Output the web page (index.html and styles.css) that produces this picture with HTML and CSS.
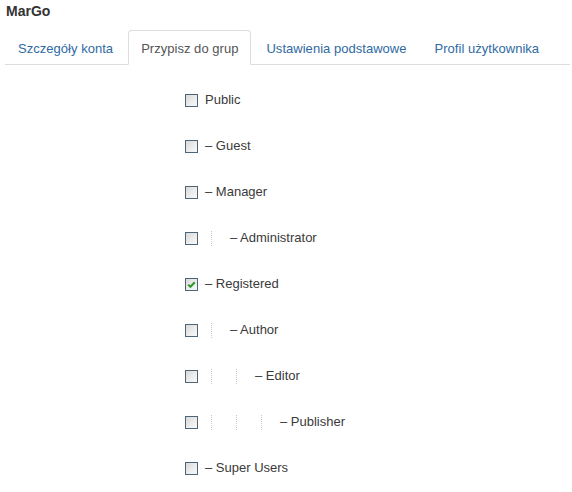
FILE: index.html
```html
<!DOCTYPE html>
<html lang="pl">
<head>
<meta charset="utf-8">
<link rel="stylesheet" href="styles.css">
</head>
<body>
<h3 class="title">MarGo</h3>
<ul class="tabs">
  <li class="tab"><a href="#">Szczegóły konta</a></li>
  <li class="tab active"><a href="#">Przypisz do grup</a></li>
  <li class="tab"><a href="#">Ustawienia podstawowe</a></li>
  <li class="tab"><a href="#">Profil użytkownika</a></li>
</ul>
<ul class="groups">
  <li class="row"><span class="cb"></span><span class="lbl">Public</span></li>
  <li class="row"><span class="cb"></span><span class="lbl">– Guest</span></li>
  <li class="row"><span class="cb"></span><span class="lbl">– Manager</span></li>
  <li class="row"><span class="cb"></span><span class="gi"></span><span class="lbl">– Administrator</span></li>
  <li class="row"><span class="cb checked"><svg width="11" height="11" viewBox="0 0 11 11"><path d="M2.2 5.6 L4.4 7.8 L8.8 3.2" fill="none" stroke="#2e9a2e" stroke-width="2"/></svg></span><span class="lbl">– Registered</span></li>
  <li class="row"><span class="cb"></span><span class="gi"></span><span class="lbl">– Author</span></li>
  <li class="row"><span class="cb"></span><span class="gi"></span><span class="gi"></span><span class="lbl">– Editor</span></li>
  <li class="row"><span class="cb"></span><span class="gi"></span><span class="gi"></span><span class="gi"></span><span class="lbl">– Publisher</span></li>
  <li class="row"><span class="cb"></span><span class="lbl">– Super Users</span></li>
</ul>
</body>
</html>
```
FILE: styles.css
```css
html, body {
  margin: 0;
  padding: 0;
  background: #fff;
}
body {
  font-family: "Liberation Sans", Arial, sans-serif;
  font-size: 13px;
  color: #333;
  width: 572px;
}
.title {
  margin: 0;
  padding: 3px 0 0 6px;
  font-size: 14px;
  font-weight: bold;
  line-height: 17px;
  height: 27px;
  color: #333;
}
.tabs {
  list-style: none;
  margin: 0 2px 0 5px;
  padding: 0;
  display: flex;
  border-bottom: 1px solid #ddd;
}
.tab {
  margin-right: 2px;
  margin-bottom: -1px;
}
.tab a {
  display: block;
  padding: 9px 12px 7px;
  line-height: 17px;
  letter-spacing: 0.03px;
  border: 1px solid transparent;
  border-radius: 4px 4px 0 0;
  color: #2f6aa3;
  text-decoration: none;
}
.tab.active a {
  color: #555;
  background: #fff;
  border-color: #ddd #ddd transparent;
}
.groups {
  list-style: none;
  margin: 0;
  padding: 12px 0 0 185px;
}
.row {
  height: 46px;
  display: flex;
  align-items: center;
}
.cb {
  box-sizing: border-box;
  width: 13px;
  height: 13px;
  border: 1px solid #4f6475;
  background: linear-gradient(135deg, #d8d8d8 0%, #eeeeee 60%, #f8f8f8 100%);
  margin-right: 7px;
  display: flex;
  align-items: center;
  justify-content: center;
  flex: none;
}
.cb svg {
  display: block;
}
.gi {
  box-sizing: border-box;
  width: 25px;
  height: 15px;
  border-left: 1px dotted #c8c8c8;
  margin-left: 6px;
  margin-right: -6px;
  flex: none;
}
.lbl {
  line-height: 16px;
  color: #3a3a3a;
}
```
